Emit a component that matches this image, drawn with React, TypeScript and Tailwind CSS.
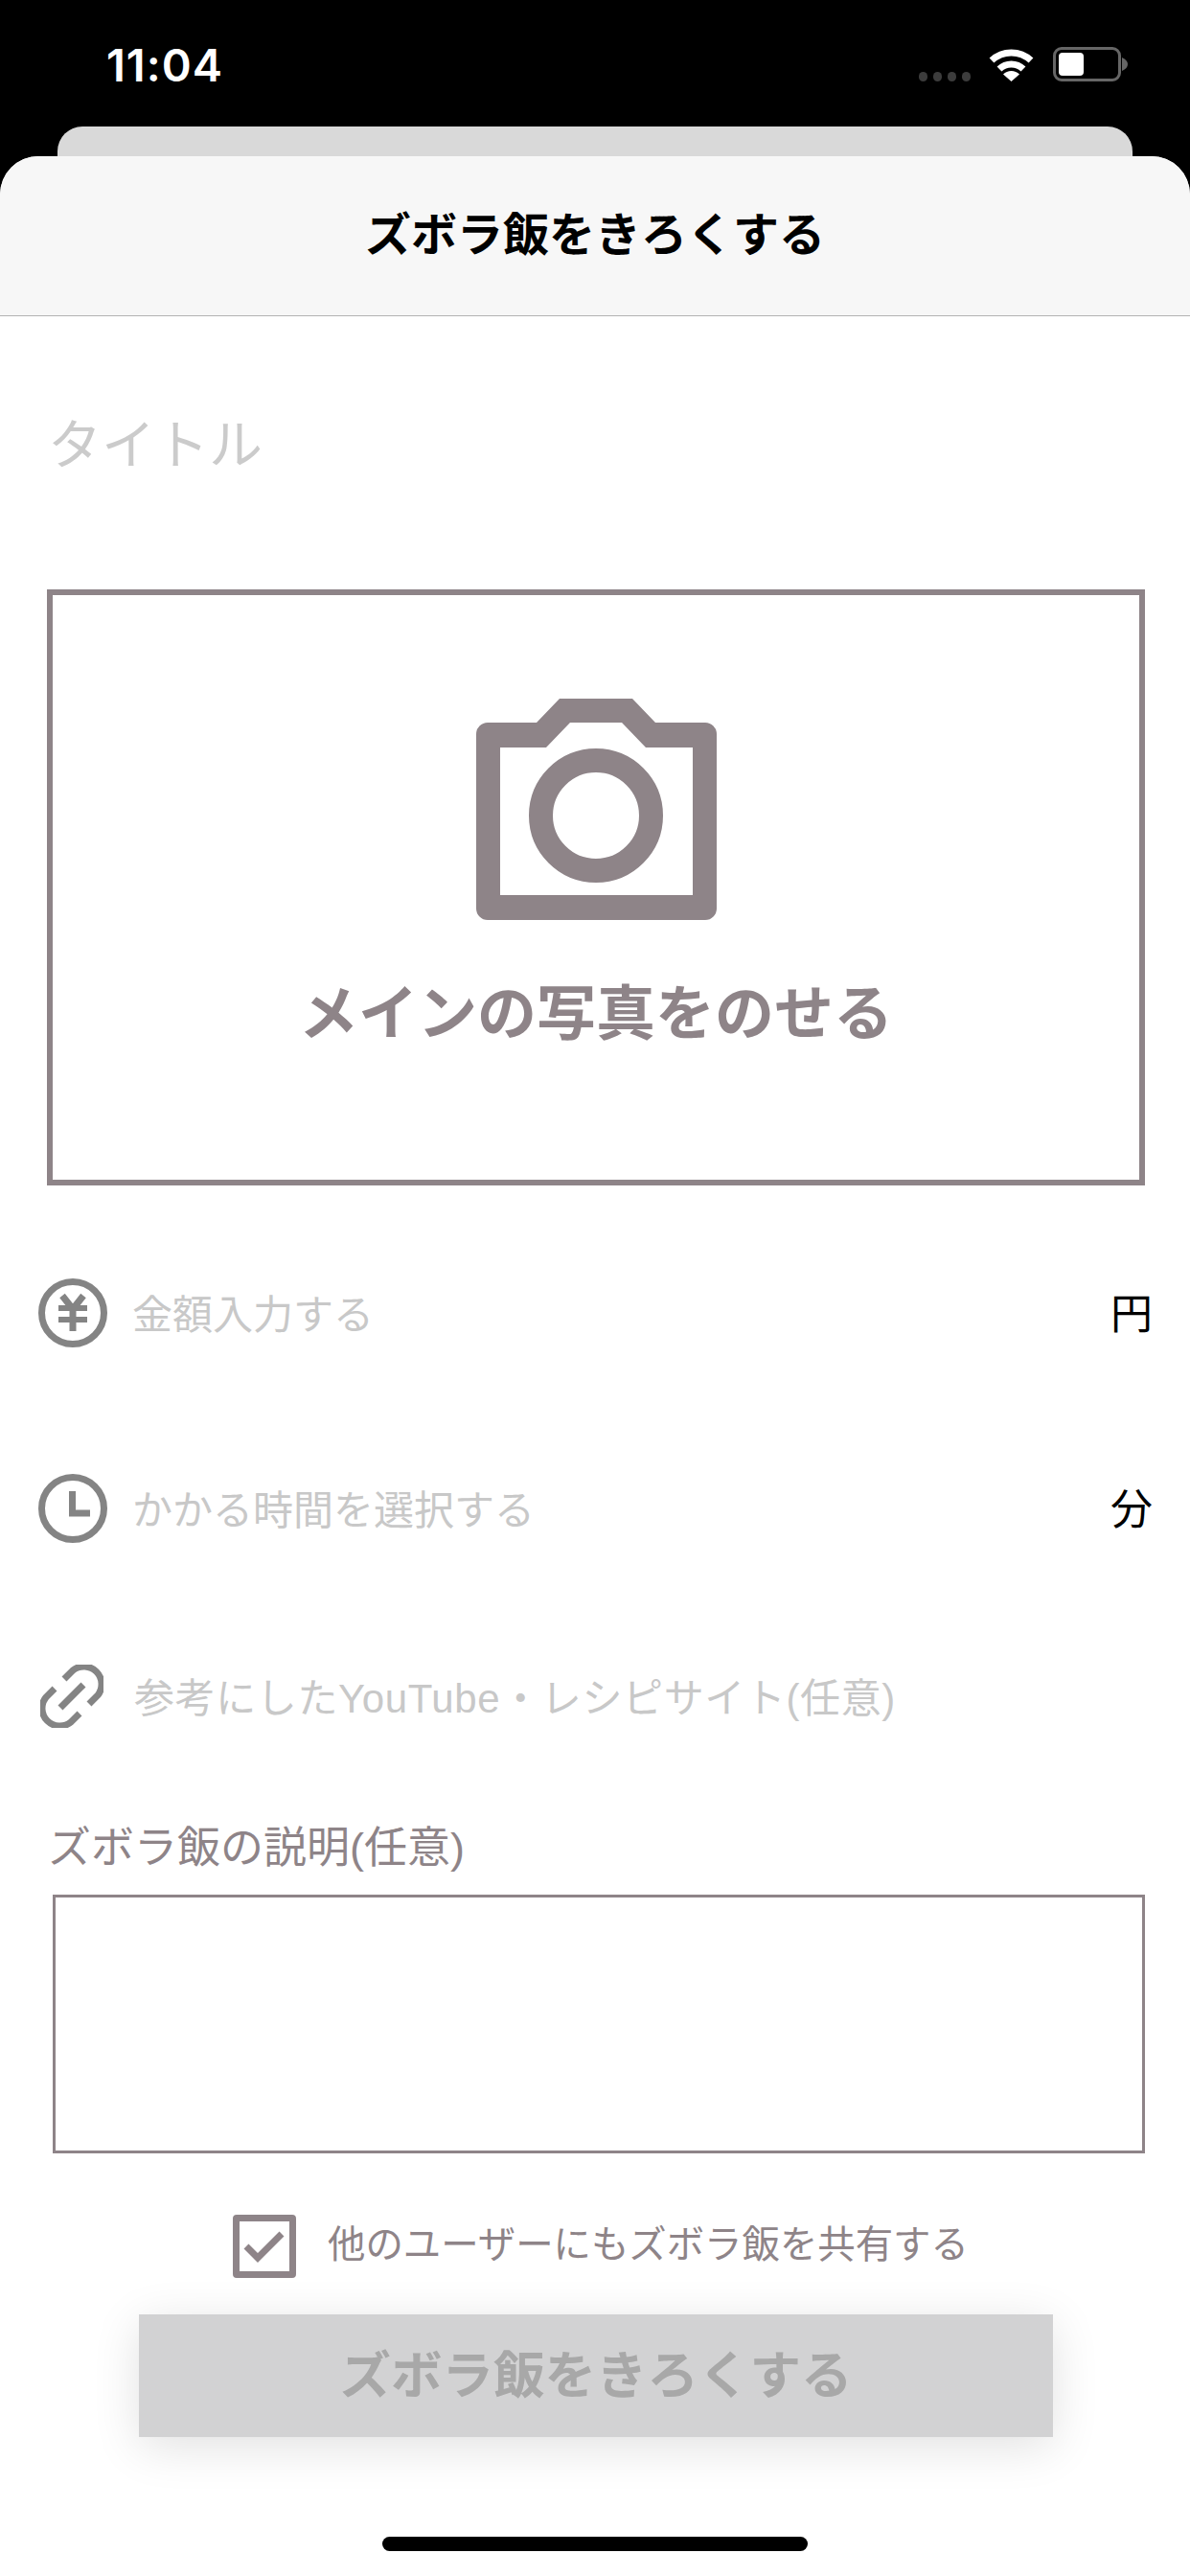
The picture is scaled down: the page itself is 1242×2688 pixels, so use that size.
const FONT = 'font-["Liberation_Sans","Noto_Sans_CJK_JP",sans-serif]'

function CameraIcon() {
  return (
    <svg width="251" height="231" viewBox="0 0 251 231" className="block">
      <path
        fillRule="evenodd"
        fill="#8e8488"
        d="M12 25H63L87 0H163L187 25H239A12 12 0 0 1 251 37V219A12 12 0 0 1 239 231H12A12 12 0 0 1 0 219V37A12 12 0 0 1 12 25ZM25 51V205H226V51H177L152 25H98L73 51Z"
      />
      <circle cx="125" cy="122" r="57.5" fill="none" stroke="#8e8488" strokeWidth="25" />
    </svg>
  )
}

function YenIcon() {
  return (
    <svg width="72" height="72" viewBox="0 0 72 72" fill="none" stroke="#848484">
      <circle cx="36" cy="36" r="32.5" strokeWidth="7" />
      <path d="M25 18L36 32L47 18M36 32V55" strokeWidth="7" />
      <path d="M21 31H51M21 43H51" strokeWidth="6" />
    </svg>
  )
}

function ClockIcon() {
  return (
    <svg width="72" height="72" viewBox="0 0 72 72" fill="none" stroke="#848484">
      <circle cx="36" cy="36" r="32.5" strokeWidth="7" />
      <path d="M35.5 18V41H54" strokeWidth="7" />
    </svg>
  )
}

function LinkIcon() {
  return (
    <svg width="66" height="66" viewBox="0 0 66 66" fill="none" stroke="#848484" strokeWidth="7">
      <path d="M25 15L34 6A18.5 18.5 0 0 1 60 32L51 41" />
      <path d="M41 51L32 60A18.5 18.5 0 0 1 6 34L15 25" />
      <path d="M21 45L45 21" />
    </svg>
  )
}

function StatusIcons() {
  return (
    <div className="flex items-start">
      <div className="flex gap-[6px] mt-[26px] mr-[19px]">
        {[0, 1, 2, 3].map(i => <span key={i} className="w-[9px] h-[10px] rounded-full bg-[#3c3c3c]" />)}
      </div>
      <svg width="47" height="36" viewBox="0 0 47 36" fill="none" stroke="#fff" className="mr-[20px]">
        <path d="M3 14A30 30 0 0 1 44 14" strokeWidth="7" />
        <path d="M11 23A18 18 0 0 1 36 23" strokeWidth="7" />
        <path d="M23.5 36L15 28.5A12 12 0 0 1 32 28.5Z" fill="#fff" stroke="none" />
      </svg>
      <div className="w-[71px] h-[36px] rounded-[9px] border-[3px] border-[#666] p-[3px]">
        <div className="w-[26px] h-full rounded-[4px] bg-white" />
      </div>
      <svg width="6" height="14" viewBox="0 0 6 14" className="mt-[11px] ml-[1px]">
        <path d="M0 0C4 2 6 4 6 7C6 10 4 12 0 14Z" fill="#666" />
      </svg>
    </div>
  )
}

function InputRow({ icon, label, unit, iconClass, labelClass, className }: {
  icon: React.ReactNode
  label: string
  unit?: string
  iconClass: string
  labelClass: string
  className: string
}) {
  return (
    <div className={`flex items-center h-[100px] ${className}`}>
      <div className={`shrink-0 flex ${iconClass}`}>{icon}</div>
      <span className={`flex-1 pt-[4px] text-[#c8c8c8] ${labelClass}`}>{label}</span>
      {unit && <span className="pt-[4px] text-[44px] text-black mr-[39px]">{unit}</span>}
    </div>
  )
}

export default function App() {
  return (
    <div className={`w-[1242px] h-[2688px] bg-black flex flex-col overflow-hidden ${FONT}`}>
      <div className="h-[132px] shrink-0 flex items-start justify-between pl-[111px] pr-[65px]">
        <span className="mt-[38px] text-[47px] leading-[60px] font-semibold tracking-[1px] text-white font-['Inter',sans-serif]">11:04</span>
        <div className="mt-[49px]"><StatusIcons /></div>
      </div>
      <div className="h-[31px] shrink-0 mx-[60px] rounded-t-[26px] bg-[#d9d9d9]" />

      <div className="flex-1 bg-white rounded-t-[40px] overflow-hidden flex flex-col">
        <header className="h-[167px] shrink-0 flex items-center justify-center pb-[1px] bg-[#f7f7f7] border-b border-[#b2b2b2]">
          <h1 className="text-[48px] font-bold text-black leading-none">ズボラ飯をきろくする</h1>
        </header>

        <div className="h-[264px] flex items-center pl-[50px] pt-[5px] text-[56px] text-[#cbcbcb]">タイトル</div>

        <div className="mt-[21px] ml-[49px] w-[1146px] h-[622px] border-[6px] border-[#8e8488] flex flex-col items-center pt-[108px]">
          <CameraIcon />
          <div className="mt-[63px] text-[62px] leading-[72px] font-bold text-[#8e8488]">メインの写真をのせる</div>
        </div>

        <InputRow
          className="mt-[83px]"
          iconClass="ml-[40px]"
          labelClass="ml-[26px] text-[42px]"
          icon={<YenIcon />}
          label="金額入力する"
          unit="円"
        />
        <InputRow
          className="mt-[104px]"
          iconClass="ml-[40px]"
          labelClass="ml-[26px] text-[42px]"
          icon={<ClockIcon />}
          label="かかる時間を選択する"
          unit="分"
        />
        <InputRow
          className="mt-[96px]"
          iconClass="ml-[42px]"
          labelClass="ml-[32px] text-[42px] tracking-[0.6px]"
          icon={<LinkIcon />}
          label="参考にしたYouTube・レシピサイト(任意)"
        />

        <div className="mt-[76px] h-[60px] flex items-center pl-[50px] pt-[5px] text-[45px] text-[#8e8488]">ズボラ飯の説明(任意)</div>
        <div className="mt-[21px] ml-[55px] w-[1140px] h-[270px] border-[3px] border-[#8e8488]" />

        <div className="mt-[64px] h-[66px] flex items-center pl-[243px]">
          <div className="w-[66px] h-[66px] rounded-[4px] border-[7px] border-[#8e8488] flex items-center justify-center">
            <svg width="44" height="34" viewBox="0 0 44 34" fill="none" stroke="#8e8488" strokeWidth="7">
              <path d="M3 17L15 29L40 4" />
            </svg>
          </div>
          <span className="ml-[33px] mb-[3px] text-[39.4px] text-[#8e8488]">他のユーザーにもズボラ飯を共有する</span>
        </div>

        <button
          type="button"
          className="mt-[38px] ml-[145px] w-[954px] h-[128px] shrink-0 pt-[2px] bg-[#d2d2d3] shadow-[0_10px_50px_rgba(0,0,0,0.12)] text-[53.5px] font-bold text-[#a8a8a8] flex items-center justify-center"
        >
          ズボラ飯をきろくする
        </button>

        <div className="mt-[104px] mx-auto w-[444px] h-[15px] rounded-full bg-black" />
      </div>
    </div>
  )
}
